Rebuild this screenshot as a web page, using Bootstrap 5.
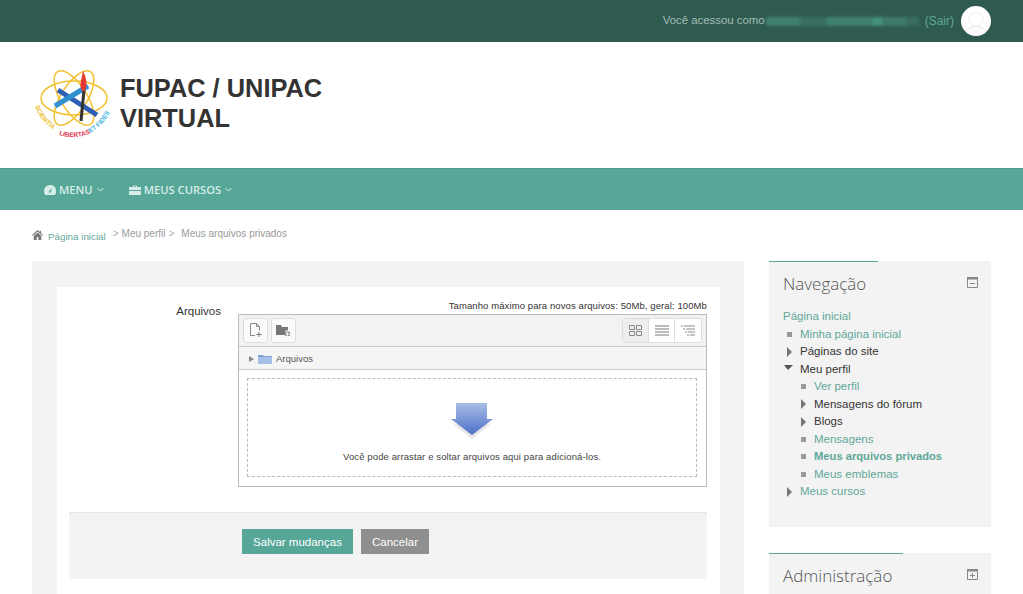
<!DOCTYPE html>
<html lang="pt-BR">
<head>
  <meta charset="UTF-8">
  <meta name="viewport" content="width=device-width, initial-scale=1.0">
  <title>Meus arquivos privados</title>
  <link href="https://cdn.jsdelivr.net/npm/bootstrap@5.3.0/dist/css/bootstrap.min.css" rel="stylesheet">
  <style>
    html, body { height: 100%; overflow: hidden; }
    body { font-family: "Liberation Sans", Arial, sans-serif; font-size: 12px; color: #333; background: #fff; }
    a { text-decoration: none; color: #5fa899; }

    .top-strip { height: 42px; background: #2f5a50; padding-right: 32px; color: #a5bdb6; }
    .login-note { font-size: 11.4px; }
    .user-blur { width: 153px; height: 9px; margin: 0 6px 0 1px; filter: blur(1.5px); background: linear-gradient(90deg, #3f8170 0 22%, #396f62 22% 40%, #3f8170 40% 70%, #46917f 70% 76%, #3d7a6b 76% 92%, #386c60 92%); }
    .top-strip a { color: #5fa899; }
    .avatar-disc { width: 30px; height: 30px; margin-left: 7px; border-radius: 50%; background: #fff; }

    .brand-row { height: 126px; padding-left: 34px; }
    .brand-name { margin: 0 0 5px 6px; font-size: 25.4px; line-height: 30px; font-weight: 700; color: #333; }

    .main-nav.navbar { height: 42px; padding: 1px 0 0 44px; background: #56a797; border-top: 1px solid #4f9c8c; }
    .main-nav .nav-link { padding: 0; margin-right: 25px; font-family: "Open Sans", sans-serif; font-size: 11.2px; font-weight: 600; color: #d7ede8; }
    .main-nav svg.me-1 { margin-right: 3px !important; }

    .crumbs { height: 51px; padding: 16px 0 0 32px; margin: 0; font-size: 10px; color: #999; }
    .crumbs a { font-size: 9.8px; margin-top: 4px; }
    .crumbs svg { margin: 4px 5px 0 0; }
    .crumb-sep { margin: 0 3px 0 7px; color: #aaa; }
    .crumb-sep-2 { margin: 0 7px 0 3px; color: #aaa; }

    .page-cols { padding: 0 32px; gap: 25px; }
    .main-panel { width: 712px; flex: none; padding: 26px 24px 0 25px; background: #f3f3f3; }
    .form-sheet { height: 307px; padding: 0 13px 0 12px; background: #fff; }
    .form-label-col { width: 152px; flex: none; padding-top: 16px; text-align: right; font-size: 11.5px; color: #333; }
    .form-field-col { width: 469px; margin-left: 17px; }
    .limit-note { height: 27px; padding-top: 13px; font-size: 9.5px; line-height: 12px; letter-spacing: .1px; text-align: right; color: #333; }

    .file-box { height: 173px; border: 1px solid #bbb; }
    .file-bar { height: 32px; padding: 3px 4px 0 4px; background: #f2f2f2; border-bottom: 1px solid #ccc; }
    .tool-btn { width: 25px; height: 25px; margin-right: 3px; background: #fafafa; border: 1px solid #ddd; border-radius: 3px; }
    .view-group { height: 25px; border: 1px solid #ddd; border-radius: 3px; background: #fff; }
    .view-btn { width: 26px; border-right: 1px solid #ddd; }
    .view-btn:last-child { border-right: 0; }
    .view-on { background: #eee; }
    .path-bar { height: 23px; padding: 2px 0 0 10px; background: #f5f5f5; border-bottom: 1px solid #ccc; font-size: 9.5px; color: #555; }
    .path-bar svg { margin-right: 4px; }
    .drop-wrap { padding: 8px 9px 9px 8px; }
    .drop-zone { height: 99px; padding-top: 24px; border: 1px dashed #bbb; text-align: center; font-size: 9.5px; letter-spacing: .12px; color: #444; }
    .drop-zone svg { display: block; margin: 0 auto 11px; }

    .form-foot { height: 67px; margin-top: 25px; padding: 16px 0 0 173px; background: #f3f3f3; border-top: 1px solid #e6e6e6; }
    .form-foot .btn { height: 25px; padding: 0; margin-right: 8px; border: 0; border-radius: 0; font-size: 11.5px; line-height: 22px; color: #fff; }
    .btn-save { width: 111px; background: #56a797; }
    .btn-cancel { width: 68px; background: #8f8f8f; }

    .side-col { width: 222px; flex: none; }
    .side-block { margin-bottom: 26px; padding: 12px 13px 0 14px; background: #f3f3f3; position: relative; }
    .side-nav { height: 266px; }
    .side-block::before { content: ""; position: absolute; top: 0; left: 0; height: 1px; background: #56a797; }
    .side-nav::before { width: 109px; }
    .side-admin::before { width: 134px; }
    .side-admin { height: 41px; margin-bottom: 0; }
    .side-title { height: 25px; margin-bottom: 10px; }
    .side-title h5 { margin: 0; font-family: "Open Sans", sans-serif; font-size: 17px; font-weight: 300; line-height: 22px; color: #555; }
    .tree-list { margin: 0; padding: 0; list-style: none; font-size: 11.5px; line-height: 17.5px; }
    .tree-list li { display: flex; align-items: center; height: 17.5px; }
    .tree-list span { color: #333; }
    .lvl-1 { padding-left: 4px; }
    .lvl-2 { padding-left: 18px; }
    .tree-list a.on { font-size: 11.2px; font-weight: 700; }
    .tree-mark { width: 5px; height: 5px; margin-right: 8px; flex: none; background: #999; }
    .tree-arrow { width: 0; height: 0; margin-right: 8px; flex: none; border-left: 5px solid #777; border-top: 5px solid transparent; border-bottom: 5px solid transparent; }
    .tree-open { width: 0; height: 0; margin: 0 7px 4px -3px; flex: none; border-top: 5px solid #555; border-left: 4px solid transparent; border-right: 5px solid transparent; }
  </style>
</head>
<body>

<!-- Top strip -->
<div class="top-strip d-flex align-items-center justify-content-end">
  <span class="login-note">Você acessou como</span>
  <div class="user-blur"></div>
  <a href="#">(Sair)</a>
  <div class="avatar-disc overflow-hidden">
    <svg width="30" height="30" viewBox="0 0 30 30"><circle cx="15" cy="13" r="7" fill="#fff" stroke="#efe8e8"/><path d="M4 30c1-8 6-10 11-10s10 2 11 10z" fill="#fafafa" stroke="#efe8e8"/></svg>
  </div>
</div>

<!-- Logo -->
<div class="brand-row d-flex align-items-center">
  <svg width="80" height="72" viewBox="0 0 80 72">
    <g fill="none" stroke="#f3c02f" stroke-width="1.5">
      <ellipse cx="40" cy="29" rx="33" ry="17"/>
      <ellipse cx="40" cy="29" rx="31" ry="13" transform="rotate(58 40 29)"/>
      <ellipse cx="40" cy="29" rx="31" ry="13" transform="rotate(-58 40 29)"/>
    </g>
    <path d="M24 21 63 46" stroke="#2f5fb5" stroke-width="5"/>
    <path d="M21 37 54 17" stroke="#2f8fd0" stroke-width="5"/>
    <path d="M50 21 47 52" stroke="#333" stroke-width="3"/>
    <path d="M48 22c-3-6-1-9 1-20 3 6 5 13 2 20z" fill="#e23a2e"/>
    <defs>
      <path id="arcLeft" d="M1 37C4 47 12 57 24 63"/>
      <path id="arcMid" d="M25 66C34 69 44 69 55 65"/>
      <path id="arcRight" d="M56 64C66 59 74 49 78 38"/>
    </defs>
    <g font-family="Liberation Sans" font-size="6.5" font-weight="700">
      <text fill="#f1c232"><textPath href="#arcLeft">SCIENTIA</textPath></text>
      <text fill="#e4344e"><textPath href="#arcMid">LIBERTAS</textPath></text>
      <text fill="#3fb4e0"><textPath href="#arcRight">ET FIDES</textPath></text>
    </g>
  </svg>
  <div class="brand-name">FUPAC / UNIPAC<br>VIRTUAL</div>
</div>

<!-- Main menu -->
<nav class="main-nav navbar justify-content-start">
  <a class="nav-link d-flex align-items-center" href="#">
    <svg class="me-1" width="12" height="10" viewBox="0 0 12 10"><path d="M6 0a6 6 0 0 0-6 6c0 1.500.5 2.800 1.300 4h9.400A6 6 0 0 0 6 0zm.8 6.900a1 1 0 1 1-1.400-1l2.600-3z" fill="#d7ede8" fill-rule="evenodd"/></svg>
    MENU
    <svg class="ms-1" width="7" height="5" viewBox="0 0 7 5"><path d="M.5 1l3 3 3-3" fill="none" stroke="#d7ede8"/></svg>
  </a>
  <a class="nav-link d-flex align-items-center" href="#">
    <svg class="me-1" width="12" height="10" viewBox="0 0 12 10"><path d="M4 2V.5h4V2h4v3H0V2zm1 0h2v-.700H5zM0 6h12v4H0z" fill="#d7ede8" fill-rule="evenodd"/></svg>
    MEUS CURSOS
    <svg class="ms-1" width="7" height="5" viewBox="0 0 7 5"><path d="M.5 1l3 3 3-3" fill="none" stroke="#d7ede8"/></svg>
  </a>
</nav>

<!-- Breadcrumb -->
<div class="crumbs d-flex align-items-start">
  <svg width="11" height="10" viewBox="0 0 11 10"><path d="M5.500 0 0 5l.7.700 4.800-4.300 4.800 4.300L11 5 9 3.200V.8H7.800v1.300zM1.700 6v4h3V7h1.600v3h3V6L5.500 2.600z" fill="#777"/></svg>
  <a href="#">Página inicial</a>
  <span class="crumb-sep">&gt;</span><span>Meu perfil</span><span class="crumb-sep-2">&gt;</span><span>Meus arquivos privados</span>
</div>

<div class="page-cols d-flex align-items-start">
  <!-- Main column -->
  <div class="main-panel">
    <div class="form-sheet">
      <div class="d-flex">
        <div class="form-label-col">Arquivos</div>
        <div class="form-field-col">
          <div class="limit-note">Tamanho máximo para novos arquivos: 50Mb, geral: 100Mb</div>
          <div class="file-box">
            <div class="file-bar d-flex justify-content-between">
              <div class="d-flex">
                <div class="tool-btn d-flex align-items-center justify-content-center">
                  <svg width="14" height="15" viewBox="0 0 14 15"><path d="M1.500.5h6l3 3v4M7.500.5v3h3M6 12.500H1.500V.5" fill="none" stroke="#888"/><path d="M10 9v5M7.500 11.500h5" stroke="#777"/></svg>
                </div>
                <div class="tool-btn d-flex align-items-center justify-content-center">
                  <svg width="15" height="13" viewBox="0 0 15 13"><path d="M0 1h5l1 2h6v3.500H9V11H0z" fill="#777"/><path d="M9 7.500h5V12H9z" fill="#999"/><path d="M11.500 8v4M9.500 10h4" stroke="#eee"/></svg>
                </div>
              </div>
              <div class="view-group d-flex">
                <div class="view-btn view-on d-flex align-items-center justify-content-center">
                  <svg width="13" height="11" viewBox="0 0 13 11"><path d="M.5.5h5v4h-5zM7.500.5h5v4h-5zM.5 6.500h5v4h-5zM7.500 6.500h5v4h-5z" fill="none" stroke="#888"/></svg>
                </div>
                <div class="view-btn d-flex align-items-center justify-content-center">
                  <svg width="14" height="11" viewBox="0 0 14 11"><path d="M0 1h14M0 4h14M0 7h14M0 10h14" stroke="#777"/></svg>
                </div>
                <div class="view-btn d-flex align-items-center justify-content-center">
                  <svg width="14" height="11" viewBox="0 0 14 11"><path d="M3 1h11M5 4h9M7 7h7M9 10h5M0 1h2M2 4h2M4 7h2M6 10h2" stroke="#888"/></svg>
                </div>
              </div>
            </div>
            <div class="path-bar d-flex align-items-center">
              <svg width="5" height="6" viewBox="0 0 5 6"><path d="M0 0l5 3-5 3z" fill="#888"/></svg>
              <svg width="14" height="10" viewBox="0 0 14 10"><path d="M0 1h5l1 1h8v8H0z" fill="#7f9fd6"/><path d="M0 3h14v7H0z" fill="#a7c0e8"/></svg>
              <span>Arquivos</span>
            </div>
            <div class="drop-wrap">
              <div class="drop-zone">
                <svg width="42" height="36" viewBox="0 0 42 36">
                  <defs><linearGradient id="dropFill" x1="0" y1="0" x2="0" y2="1"><stop offset="0" stop-color="#a9bde6"/><stop offset="1" stop-color="#4a70c6"/></linearGradient></defs>
                  <path d="M21 36 3 21h36z" fill="#e6e6e6"/>
                  <path d="M5 0h31v16h6L21 32 0 16h5z" fill="url(#dropFill)"/>
                </svg>
                Você pode arrastar e soltar arquivos aqui para adicioná-los.
              </div>
            </div>
          </div>
        </div>
      </div>
      <div class="form-foot">
        <button type="button" class="btn btn-save">Salvar mudanças</button><button type="button" class="btn btn-cancel">Cancelar</button>
      </div>
    </div>
  </div>

  <!-- Side column -->
  <div class="side-col">
    <div class="side-block side-nav">
      <div class="side-title d-flex justify-content-between">
        <h5>Navegação</h5>
        <svg class="mt-1" width="11" height="11" viewBox="0 0 11 11"><path d="M.5.5h10v10H.5z" fill="#f3f3f3" stroke="#888"/><path d="M0 0h11v2.500H0zM3 6h5v1H3z" fill="#888"/></svg>
      </div>
      <ul class="tree-list">
        <li><a href="#">Página inicial</a></li>
        <li class="lvl-1"><i class="tree-mark"></i><a href="#">Minha página inicial</a></li>
        <li class="lvl-1"><i class="tree-arrow"></i><span>Páginas do site</span></li>
        <li class="lvl-1"><i class="tree-open"></i><span>Meu perfil</span></li>
        <li class="lvl-2"><i class="tree-mark"></i><a href="#">Ver perfil</a></li>
        <li class="lvl-2"><i class="tree-arrow"></i><span>Mensagens do fórum</span></li>
        <li class="lvl-2"><i class="tree-arrow"></i><span>Blogs</span></li>
        <li class="lvl-2"><i class="tree-mark"></i><a href="#">Mensagens</a></li>
        <li class="lvl-2"><i class="tree-mark"></i><a href="#" class="on">Meus arquivos privados</a></li>
        <li class="lvl-2"><i class="tree-mark"></i><a href="#">Meus emblemas</a></li>
        <li class="lvl-1"><i class="tree-arrow"></i><a href="#">Meus cursos</a></li>
      </ul>
    </div>
    <div class="side-block side-admin">
      <div class="side-title d-flex justify-content-between">
        <h5>Administração</h5>
        <svg class="mt-1" width="11" height="11" viewBox="0 0 11 11"><path d="M.5.5h10v10H.5z" fill="#f3f3f3" stroke="#888"/><path d="M0 0h11v2.500H0zM3 6h5v1H3zM5 4h1v5H5z" fill="#888"/></svg>
      </div>
    </div>
  </div>
</div>

<script src="https://cdn.jsdelivr.net/npm/bootstrap@5.3.0/dist/js/bootstrap.bundle.min.js"></script>
</body>
</html>
